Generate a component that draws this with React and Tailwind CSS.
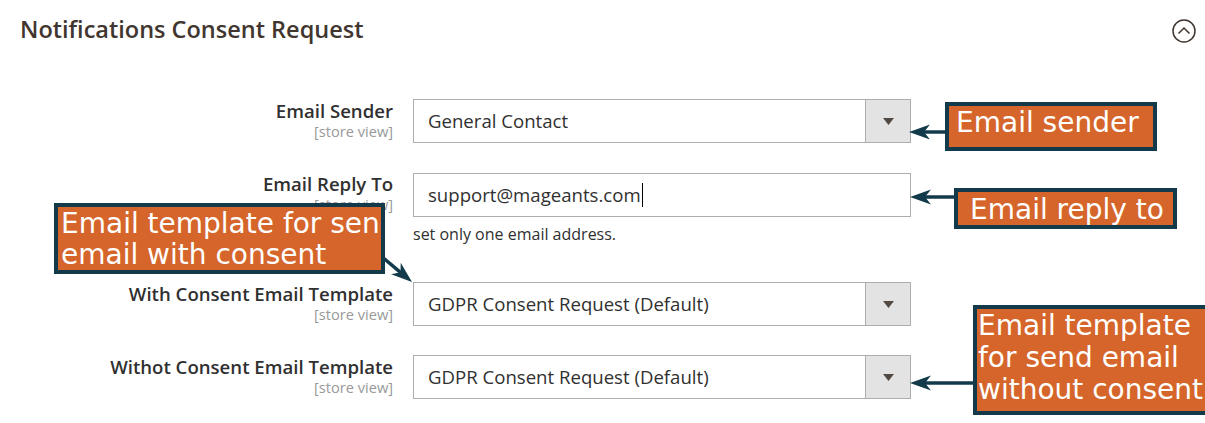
import React from "react";

function Select({ value }) {
  return (
    <div className="flex h-[44px] w-[498px] border border-[#adadad] bg-white">
      <div className="flex-1 pl-[14px] text-[18.6px] leading-[42px] text-[#303030]">{value}</div>
      <div className="flex w-[45px] items-center justify-center border-l border-[#adadad] bg-[#e3e3e3]">
        <svg width="11" height="7" viewBox="0 0 11 7">
          <polygon points="0,0 11,0 5.5,7" fill="#514943" />
        </svg>
      </div>
    </div>
  );
}

function Label({ text, scope = true }) {
  return (
    <div className="w-[393px] shrink-0 text-right">
      <div className="text-[18.6px] font-semibold leading-[26px] text-[#303030]">{text}</div>
      {scope && <div className="mt-[-2px] text-[14.6px] leading-[18px] text-[#999999]">[store view]</div>}
    </div>
  );
}

function Arrow({ x1, y1, x2, y2 }) {
  const ang = (Math.atan2(y1 - y2, x1 - x2) * 180) / Math.PI;
  const rad = (ang * Math.PI) / 180;
  const ex = x2 + Math.cos(rad) * 12;
  const ey = y2 + Math.sin(rad) * 12;
  return (
    <g>
      <line x1={x1} y1={y1} x2={ex} y2={ey} stroke="#133a4b" strokeWidth="3.5" />
      <polygon
        points="0,0 21,-7.5 15,0 21,7.5"
        fill="#133a4b"
        transform={`translate(${x2} ${y2}) rotate(${ang})`}
      />
    </g>
  );
}

export default function App() {
  return (
    <div className="relative h-[423px] w-[1205px] overflow-hidden bg-white font-['Open_Sans',sans-serif]">
      <div className="mt-[15px] flex items-start justify-between pl-[20px] pr-[9px]">
        <div className="text-[23.5px] font-semibold leading-[28px] text-[#41362f]">Notifications Consent Request</div>
        <svg className="mt-[4px]" width="24" height="24" viewBox="0 0 24 24">
          <circle cx="12" cy="12" r="11" fill="none" stroke="#41362f" strokeWidth="1.5" />
          <polyline points="6.5,14.5 12,9 17.5,14.5" fill="none" stroke="#41362f" strokeWidth="1.5" />
        </svg>
      </div>

      <div className="mt-[56px] flex flex-col">
        <div className="flex items-start">
          <div className="mt-[-1px]"><Label text="Email Sender" /></div>
          <div className="ml-[20px]"><Select value="General Contact" /></div>
        </div>

        <div className="mt-[30px] flex items-start">
          <div className="mt-[-2px]"><Label text="Email Reply To" /></div>
          <div className="ml-[20px]">
            <div className="flex h-[44px] w-[498px] items-center border border-[#adadad] bg-white pl-[14px] text-[18.6px] text-[#303030]">
              <span>support@mageants.com</span>
              <span className="ml-[1px] inline-block h-[24px] w-[1px] bg-black" />
            </div>
            <div className="mt-[7px] text-[16px] leading-[20px] text-[#303030]">set only one email address.</div>
          </div>
        </div>

        <div className="mt-[38px] flex items-start">
          <div className="mt-[-1px]"><Label text="With Consent Email Template" /></div>
          <div className="ml-[20px]"><Select value="GDPR Consent Request (Default)" /></div>
        </div>

        <div className="mt-[29px] flex items-start">
          <div className="mt-[-1px]"><Label text="Withot Consent Email Template" /></div>
          <div className="ml-[20px]"><Select value="GDPR Consent Request (Default)" /></div>
        </div>
      </div>

      {/* Annotation overlays */}
      <svg className="pointer-events-none absolute left-0 top-0" width="1205" height="423">
        <Arrow x1={946} y1={132} x2={909} y2={132} />
        <Arrow x1={955} y1={197} x2={910} y2={197} />
        <Arrow x1={974} y1={383} x2={910} y2={383} />
        <Arrow x1={381} y1={256} x2={412} y2={282} />
      </svg>

      <div className="absolute left-[945px] top-[102px] h-[49px] w-[212px] border-[4px] border-[#133a4b] bg-[#d5652a] pl-[7px] pt-[1px] font-['DejaVu_Sans',sans-serif] text-[28px] leading-[32px] text-white">
        Email sender
      </div>

      <div className="absolute left-[954px] top-[188px] h-[41px] w-[223px] border-[4px] border-[#133a4b] bg-[#d5652a] pl-[12px] pt-[2px] font-['DejaVu_Sans',sans-serif] text-[28px] leading-[32px] text-white">
        Email reply to
      </div>

      <div className="absolute left-[54px] top-[203px] h-[71px] w-[331px] overflow-hidden whitespace-nowrap border-[4px] border-[#133a4b] bg-[#d5652a] pl-[3px] pt-[1px] font-['DejaVu_Sans',sans-serif] text-[28px] leading-[31px] text-white">
        <div>Email template for send</div>
        <div>email with consent</div>
      </div>

      <div className="absolute left-[973px] top-[305px] h-[110px] w-[250px] whitespace-nowrap border-[4px] border-[#133a4b] bg-[#d5652a] pl-[1px] pt-[1px] font-['DejaVu_Sans',sans-serif] text-[28px] leading-[32px] text-white">
        <div>Email template</div>
        <div>for send email</div>
        <div>without consent</div>
      </div>
    </div>
  );
}
